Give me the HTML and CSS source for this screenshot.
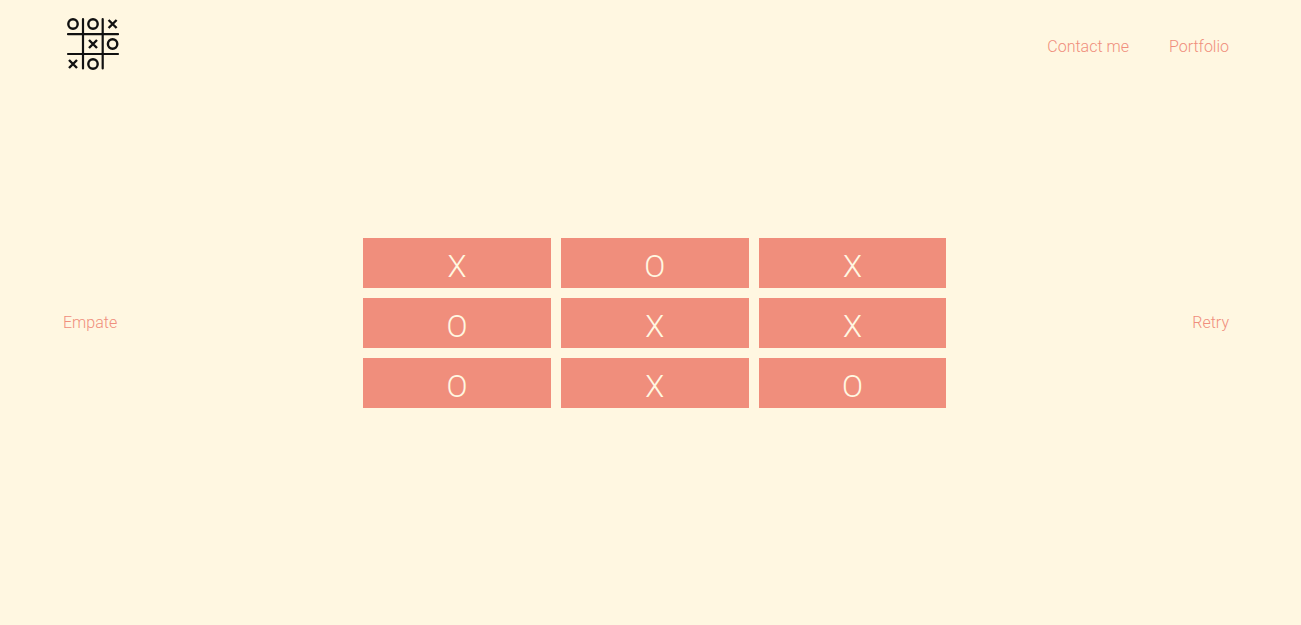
FILE: index.html
```html
<!DOCTYPE html>
<html lang="en">
<head>
  <meta charset="utf-8">
  <meta name="viewport" content="width=device-width, initial-scale=1">
  <title>Tic Tac Toe</title>
  <link rel="stylesheet" href="styles.css">
</head>
<body>
  <header class="header">
    <svg class="logo" viewBox="0 0 60 60" role="img" aria-label="Tic tac toe">
      <g class="logo-grid">
        <path d="M5 20.200H55M5 40H55M20 5V54.500M39.700 5V54.500"/>
      </g>
      <g class="logo-marks">
        <circle cx="10" cy="10" r="4.700"/>
        <circle cx="30" cy="10" r="4.700"/>
        <circle cx="49.600" cy="30" r="4.700"/>
        <circle cx="30" cy="50" r="4.700"/>
        <path d="M45.600 6L53.600 14M53.600 6L45.600 14M26 26L34 34M34 26L26 34M6 46L14 54M14 46L6 54"/>
      </g>
    </svg>
    <nav class="nav">
      <a class="link" href="#contact">Contact me</a>
      <a class="link" href="#portfolio">Portfolio</a>
    </nav>
  </header>
  <main class="game">
    <p class="status">Empate</p>
    <div class="board">
      <button class="cell" type="button">X</button>
      <button class="cell" type="button">O</button>
      <button class="cell" type="button">X</button>
      <button class="cell" type="button">O</button>
      <button class="cell" type="button">X</button>
      <button class="cell" type="button">X</button>
      <button class="cell" type="button">O</button>
      <button class="cell" type="button">X</button>
      <button class="cell" type="button">O</button>
    </div>
    <button class="retry" type="button">Retry</button>
  </main>
</body>
</html>
```
FILE: styles.css
```css
* {
  box-sizing: border-box;
}

body {
  margin: 0;
  min-height: 100vh;
  padding: 14px 72px 0 63px;
  background: #fff7e1;
  color: #f08e7c;
  font: 300 16px/20px Roboto, sans-serif;
}

button {
  border: 0;
  padding: 0;
  font: inherit;
  cursor: pointer;
}

.header {
  display: flex;
  justify-content: space-between;
  align-items: center;
}

.logo {
  width: 60px;
  height: 60px;
  fill: none;
  stroke: #111;
}

.logo-grid {
  stroke-width: 2.2;
  stroke-linecap: round;
}

.logo-marks {
  stroke-width: 2.4;
}

.nav {
  display: flex;
  gap: 40px;
  padding-top: 6px;
}

.link {
  color: inherit;
  text-decoration: none;
}

.game {
  display: flex;
  justify-content: space-between;
  align-items: center;
  min-height: 80vh;
  padding-bottom: 2px;
}

.status {
  margin: 0;
}

.board {
  display: grid;
  grid-template-columns: repeat(3, 1fr);
  gap: 10px;
  width: 50%;
}

.cell {
  height: 50px;
  padding-top: 8px;
  background: #f08e7c;
  color: #fff7e1;
  font-size: 31px;
  line-height: 42px;
}

.retry {
  background: none;
  color: inherit;
}
```
